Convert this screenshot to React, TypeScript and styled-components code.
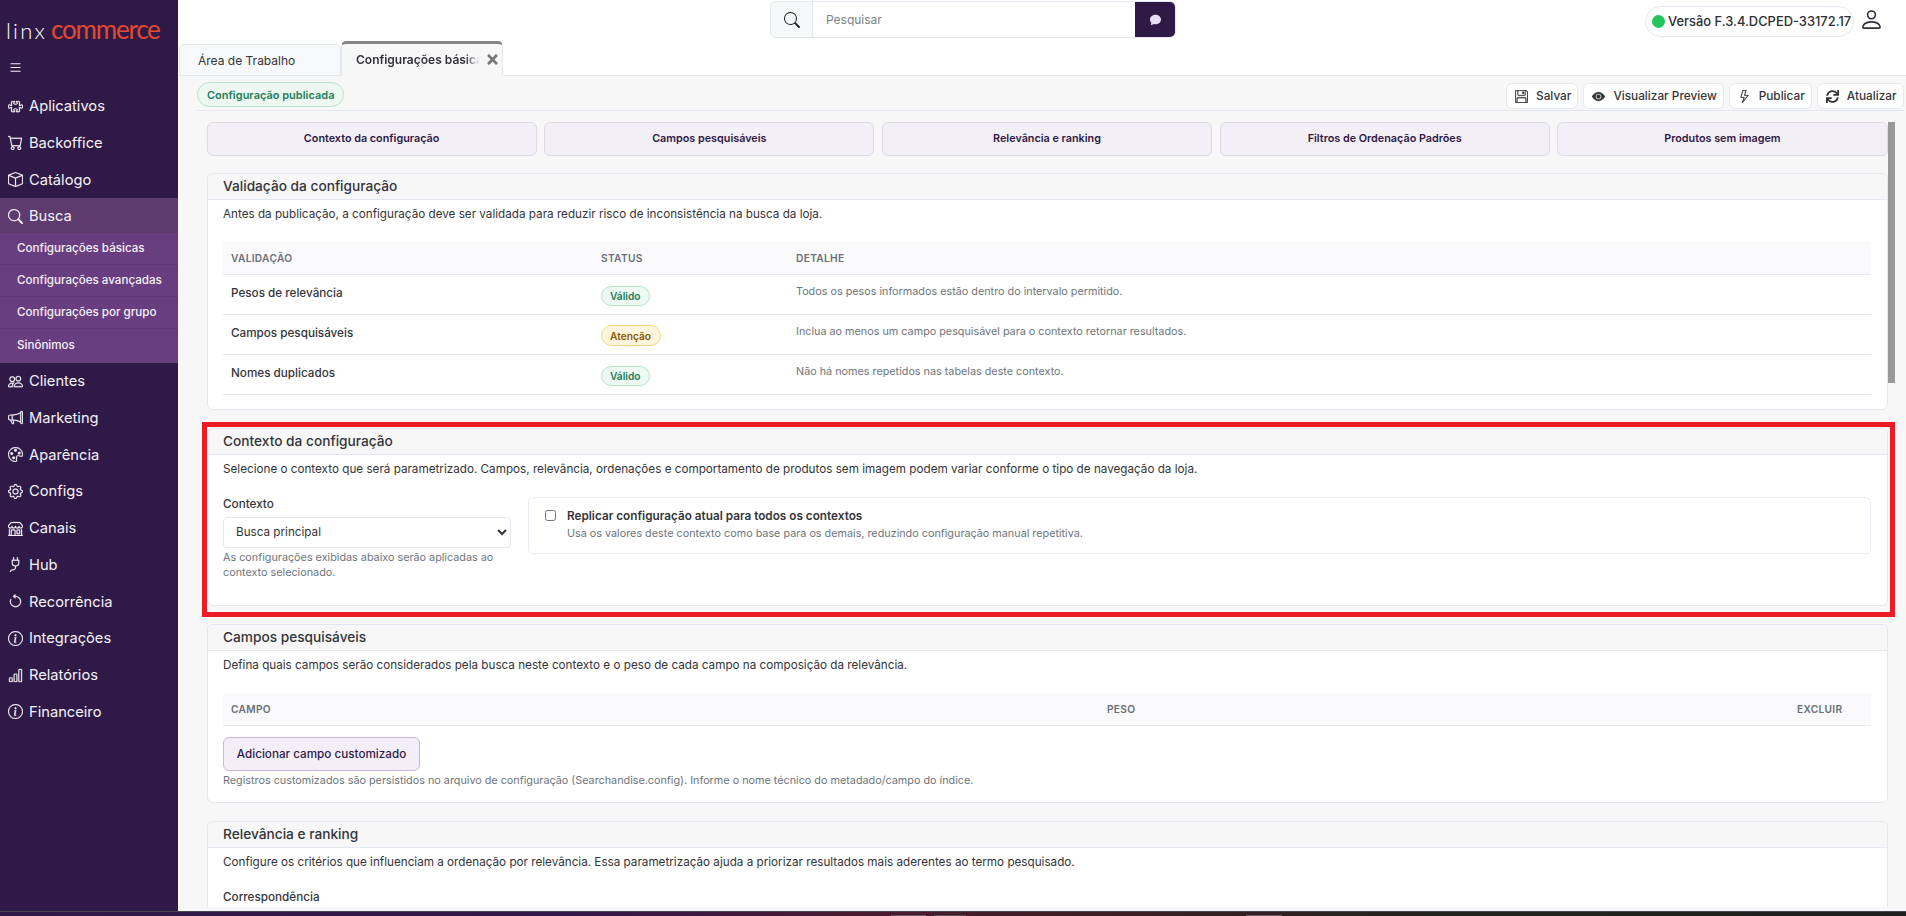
import { ReactNode } from "react";
import styled, { createGlobalStyle } from "styled-components";
import {
    BsArrowCounterclockwise,
    BsBarChart,
    BsBox,
    BsCart,
    BsChatFill,
    BsEyeFill,
    BsFloppy,
    BsGear,
    BsInfoCircle,
    BsLightning,
    BsList,
    BsMegaphone,
    BsPalette,
    BsPeople,
    BsPerson,
    BsPlug,
    BsPuzzle,
    BsSearch,
    BsShop,
} from "react-icons/bs";
import { FaSync, FaTimes } from "react-icons/fa";

const GlobalStyle = createGlobalStyle`
    html, body {
        margin: 0;
        height: 100%;
        overflow: hidden;
        background: #ffffff;
    }
    body, input, select, button {
        font-family: Inter, "Noto Sans", sans-serif;
    }
    * {
        box-sizing: border-box;
    }
`;

const Shell = styled.div`
    display: flex;
    flex-flow: column nowrap;
    height: 916px;
`;

const Frame = styled.div`
    display: flex;
    flex: 1;
    min-height: 0;
`;

const TaskbarStrip = styled.div`
    height: 5px;
    flex: none;
    border-top: 1px solid #4b4450;
    background:
        linear-gradient(#6d5560, #6d5560) 891px 3px / 35px 2px no-repeat,
        linear-gradient(#5c4a50, #5c4a50) 934px 3px / 32px 2px no-repeat,
        linear-gradient(#6d5560, #6d5560) 1246px 3px / 36px 2px no-repeat,
        linear-gradient(90deg, #2f1a47 0%, #34174a 30%, #4a1a30 45%, #3a1f22 60%, #222220 75%, #1e1e1e 100%);
`;

const Sidebar = styled.aside`
    width: 178px;
    flex: none;
    background: #2f1a47;
    color: #f5f1f8;
`;

const Logo = styled.div`
    height: 56px;
    padding: 14px 0 0 6px;
    font-family: Lato, sans-serif;
    font-weight: 300;
    font-size: 22px;
    letter-spacing: 2.2px;
    line-height: 30px;
    white-space: nowrap;
    color: #ffffff;
`;

const LogoAccent = styled.span`
    color: #e4492f;
    margin-left: 4px;
    font-size: 26px;
    font-weight: 400;
    letter-spacing: -1.2px;
`;

const Burger = styled.div`
    height: 31.7px;
    padding: 4px 0 0 8px;
    font-size: 15px;
    line-height: 1;
`;

const NavItem = styled.div<{ $active?: boolean }>`
    display: flex;
    align-items: center;
    gap: 6px;
    height: 36.75px;
    padding-left: 8px;
    font-size: 14.7px;
    background: ${(p) => (p.$active ? "#5d3b6e" : "transparent")};

    svg {
        width: 15px;
        height: 15px;
        flex: none;
        stroke: currentColor;
        stroke-width: 0.25;
    }
`;

const SubNav = styled.div`
    padding-bottom: 2px;
    background: #693e80;
`;

const SubNavItem = styled.div`
    display: flex;
    align-items: center;
    height: 32px;
    padding-left: 17px;
    font-size: 11.6px;
    font-weight: 500;
    border-bottom: 1px solid #5f3974;

    &:first-child {
        margin-top: -2px;
    }

    &:last-child {
        border-bottom: 0;
    }
`;

const Main = styled.main`
    flex: 1;
    min-width: 0;
    display: flex;
    flex-flow: column nowrap;
`;

const TopBar = styled.header`
    height: 43px;
    flex: none;
    display: flex;
    align-items: flex-start;
    padding: 1px 22px 0 592px;
`;

const SearchBox = styled.div`
    display: flex;
    width: 406px;
    height: 37px;
    border: 1px solid #e3e7ef;
    border-radius: 6px;
    overflow: hidden;
`;

const SearchIcon = styled.div`
    width: 42px;
    display: flex;
    align-items: center;
    justify-content: center;
    background: #f7f8fa;
    border-right: 1px solid #e3e7ef;
    font-size: 16px;
    color: #212529;
`;

const SearchInput = styled.input`
    flex: 1;
    min-width: 0;
    border: 0;
    outline: 0;
    padding: 0 13px;
    font-size: 12px;

    &::placeholder {
        color: #7b8189;
        opacity: 1;
    }
`;

const SearchButton = styled.button`
    width: 40px;
    border: 0;
    padding: 0;
    background: #2f1a47;
    color: #e8dff2;
    font-size: 11px;
    display: flex;
    align-items: center;
    justify-content: center;
`;

const VersionPill = styled.div`
    margin: 5px 0 0 auto;
    height: 31px;
    width: 209px;
    display: flex;
    align-items: center;
    gap: 3px;
    padding-left: 6px;
    border: 1px solid #e3e7ef;
    border-radius: 16px;
    font-size: 12.9px;
    font-weight: 500;
    color: #2b2f36;
    white-space: nowrap;
`;

const StatusDot = styled.span`
    width: 13px;
    height: 13px;
    border-radius: 50%;
    background: #22c55e;
    flex: none;
`;

const UserIcon = styled.div`
    margin: 6px 0 0 5px;
    font-size: 25px;
    line-height: 1;
    color: #2b2f36;
`;

const TabBar = styled.nav`
    height: 33px;
    flex: none;
    display: flex;
    align-items: flex-end;
    padding-left: 1px;
    border-bottom: 1px solid #e3e7ef;
`;

const Tab = styled.div<{ $active?: boolean }>`
    position: relative;
    display: flex;
    align-items: center;
    height: ${(p) => (p.$active ? "35px" : "32px")};
    width: 162px;
    margin-bottom: -1px;
    padding-left: ${(p) => (p.$active ? "14px" : "18px")};
    background: ${(p) => (p.$active ? "#f7f7f8" : "#f8f9fb")};
    border: 1px solid #e3e7ef;
    border-bottom: ${(p) => (p.$active ? "1px solid #f7f7f8" : "1px solid #e3e7ef")};
    border-top: ${(p) => (p.$active ? "3px solid #868686" : "1px solid #e3e7ef")};
    border-radius: 5px 5px 0 0;
    font-size: 12px;
    font-weight: ${(p) => (p.$active ? 600 : 400)};
    color: #33343a;
    white-space: nowrap;
    overflow: hidden;
`;

const TabFade = styled.span`
    display: block;
    width: 124px;
    overflow: hidden;
    -webkit-mask-image: linear-gradient(90deg, #000 88%, transparent 100%);
    mask-image: linear-gradient(90deg, #000 88%, transparent 100%);
`;

const TabClose = styled.span`
    margin-left: 5px;
    margin-top: 2px;
    color: #777;
    font-size: 15px;
    line-height: 1;
`;

const Workspace = styled.div`
    flex: 1;
    min-height: 0;
    display: flex;
    flex-flow: column nowrap;
    background: #f7f7f8;
`;

const Toolbar = styled.div`
    height: 35px;
    flex: none;
    margin: 0 2.5px 0 19px;
    display: flex;
    align-items: flex-start;
    justify-content: space-between;
    border-bottom: 1px solid #e3e7ef;
`;

const StatusPill = styled.span`
    margin-top: 6px;
    height: 25px;
    padding: 0 9px;
    display: inline-flex;
    align-items: center;
    border: 1px solid #b9e3cc;
    border-radius: 13px;
    background: #edf8f2;
    color: #1d7f5a;
    font-size: 11px;
    font-weight: 600;
`;

const ToolbarActions = styled.div`
    display: flex;
    gap: 5px;
    margin-top: 7px;
`;

const ToolButton = styled.button`
    height: 26px;
    display: inline-flex;
    align-items: center;
    gap: 8px;
    padding: 0 6px 0 8px;
    border: 1px solid #e6e9f0;
    border-radius: 6px;
    background: #ffffff;
    color: #33343a;
    font-size: 11.8px;
    font-weight: 500;
    white-space: nowrap;

    svg {
        width: 13px;
        height: 13px;
        stroke: currentColor;
        stroke-width: 0.25;
    }
`;

const Scroller = styled.div`
    position: relative;
    flex: 1;
    min-height: 0;
    margin: 0 0 4px 0;
    padding: 11px 18.5px 0 28.5px;
    overflow: hidden;
`;

const ScrollThumb = styled.div`
    position: absolute;
    top: 11px;
    right: 11px;
    width: 7px;
    height: 261px;
    background: #999999;
`;

const SectionNav = styled.div`
    display: grid;
    grid-template-columns: repeat(5, 1fr);
    gap: 7.5px;
    margin-bottom: 17px;
`;

const SectionButton = styled.button`
    height: 33.5px;
    border: 1px solid #dcd9e3;
    border-radius: 6px;
    background: #f3eff6;
    color: #2f1a47;
    font-size: 10.8px;
    font-weight: 600;
    padding: 0;
`;

const Card = styled.section`
    position: relative;
    margin-bottom: 17.5px;
    background: #ffffff;
    border: 1px solid #e3e7ef;
    border-radius: 6px;
`;

const CardHeader = styled.h2`
    margin: 0;
    height: 26px;
    padding: 0 15.5px;
    display: flex;
    align-items: center;
    background: #f7f7f8;
    border-bottom: 1px solid #e3e7ef;
    border-radius: 6px 6px 0 0;
    font-size: 13.7px;
    font-weight: 500;
    color: #33343a;
`;

const CardBody = styled.div`
    padding: 5px 15.5px 14.5px;
`;

const Description = styled.p`
    margin: 0 0 19px;
    font-size: 11.7px;
    line-height: 18px;
    color: #33343a;
`;

const TableRow = styled.div<{ $columns: string; $head?: boolean }>`
    display: grid;
    grid-template-columns: ${(p) => p.$columns};
    align-items: ${(p) => (p.$head ? "center" : "start")};
    height: ${(p) => (p.$head ? "33px" : "40px")};
    padding-top: ${(p) => (p.$head ? "0" : "9px")};
    background: ${(p) => (p.$head ? "#fafafc" : "#ffffff")};
    border-bottom: 1px solid #e6e9f0;
`;

const HeadCell = styled.div`
    padding-left: 8px;
    font-size: 10.2px;
    font-weight: 600;
    letter-spacing: 0.3px;
    color: #6b6f78;
`;

const NameCell = styled.div`
    padding-left: 8px;
    font-size: 11.7px;
    font-weight: 550;
    line-height: 18px;
    color: #33343a;
`;

const BadgeCell = styled.div`
    padding-left: 7.5px;
`;

const Badge = styled.span<{ $warn?: boolean }>`
    display: inline-flex;
    align-items: center;
    height: ${(p) => (p.$warn ? "21px" : "20px")};
    padding: 0 8.5px;
    border: 1px solid ${(p) => (p.$warn ? "#f4d58a" : "#b9e3cc")};
    border-radius: 11px;
    background: ${(p) => (p.$warn ? "#fff5dc" : "#edf8f2")};
    color: ${(p) => (p.$warn ? "#8a5a00" : "#1d7f5a")};
    font-size: 10.2px;
    font-weight: 600;
`;

const DetailCell = styled.div`
    padding-left: 8px;
    font-size: 10.8px;
    line-height: 16px;
    color: #6c757d;
`;

const ContextGrid = styled.div`
    display: grid;
    grid-template-columns: 288px 1fr;
    gap: 17px;
    margin-top: 1px;
    padding-bottom: 11px;
`;

const FieldLabel = styled.label`
    display: block;
    font-size: 11.7px;
    font-weight: 550;
    line-height: 14px;
    margin-bottom: 6px;
    color: #33343a;
`;

const ContextSelect = styled.select`
    display: block;
    width: 100%;
    height: 31px;
    padding: 0 8px;
    border: 1px solid #e3e7ef;
    border-radius: 4px;
    background: #ffffff;
    font-size: 11.7px;
    color: #33343a;
    outline: 0;
`;

const HintText = styled.div`
    margin-top: 2px;
    font-size: 10.8px;
    line-height: 15px;
    color: #6c757d;
`;

const ReplicateBox = styled.div`
    height: 57px;
    display: flex;
    gap: 11px;
    padding: 10px 16px 0;
    border: 1px solid #e8ebf1;
    border-radius: 5px;
`;

const ReplicateCheck = styled.input`
    width: 11px;
    height: 11px;
    margin: 2px 0 0;
    flex: none;
`;

const ReplicateTitle = styled.div`
    font-size: 11.75px;
    font-weight: 600;
    line-height: 16px;
    color: #33343a;
`;

const ReplicateHint = styled.div`
    margin-top: 2px;
    font-size: 10.8px;
    line-height: 16px;
    color: #6c757d;
`;

const AddFieldButton = styled.button`
    display: block;
    margin-top: 11px;
    width: 197px;
    height: 34px;
    padding: 0;
    border: 1px solid #c9b8dc;
    border-radius: 6px;
    background: #f3eef8;
    color: #2f1a47;
    font-size: 11.7px;
    font-weight: 500;
`;

const HighlightFrame = styled.div`
    position: absolute;
    top: -7px;
    left: -6px;
    right: -8px;
    bottom: -12px;
    border: 5px solid #ed1c24;
    pointer-events: none;
`;

const navItems: [string, ReactNode][] = [
    ["Aplicativos", <BsPuzzle />],
    ["Backoffice", <BsCart />],
    ["Catálogo", <BsBox />],
];

const navItemsAfter: [string, ReactNode][] = [
    ["Clientes", <BsPeople />],
    ["Marketing", <BsMegaphone />],
    ["Aparência", <BsPalette />],
    ["Configs", <BsGear />],
    ["Canais", <BsShop />],
    ["Hub", <BsPlug />],
    ["Recorrência", <BsArrowCounterclockwise />],
    ["Integrações", <BsInfoCircle />],
    ["Relatórios", <BsBarChart />],
    ["Financeiro", <BsInfoCircle />],
];

const subItems = ["Configurações básicas", "Configurações avançadas", "Configurações por grupo", "Sinônimos"];
const sections = ["Contexto da configuração", "Campos pesquisáveis", "Relevância e ranking", "Filtros de Ordenação Padrões", "Produtos sem imagem"];

const validationColumns = "370px 195px 1fr";
const fieldColumns = "876px 690px 1fr";

const validations = [
    { name: "Pesos de relevância", status: "Válido", detail: "Todos os pesos informados estão dentro do intervalo permitido." },
    { name: "Campos pesquisáveis", status: "Atenção", warn: true, detail: "Inclua ao menos um campo pesquisável para o contexto retornar resultados." },
    { name: "Nomes duplicados", status: "Válido", detail: "Não há nomes repetidos nas tabelas deste contexto." },
];

export default function App() {
    return (
        <Shell>
            <GlobalStyle />
            <Frame>
                <Sidebar>
                    <Logo>
                        linx<LogoAccent>commerce</LogoAccent>
                    </Logo>
                    <Burger>
                        <BsList />
                    </Burger>
                    {navItems.map(([label, icon]) => (
                        <NavItem key={label}>
                            {icon}
                            {label}
                        </NavItem>
                    ))}
                    <NavItem $active>
                        <BsSearch />
                        Busca
                    </NavItem>
                    <SubNav>
                        {subItems.map((label) => (
                            <SubNavItem key={label}>{label}</SubNavItem>
                        ))}
                    </SubNav>
                    {navItemsAfter.map(([label, icon]) => (
                        <NavItem key={label}>
                            {icon}
                            {label}
                        </NavItem>
                    ))}
                </Sidebar>
                <Main>
                    <TopBar>
                        <SearchBox>
                            <SearchIcon>
                                <BsSearch />
                            </SearchIcon>
                            <SearchInput placeholder="Pesquisar" />
                            <SearchButton>
                                <BsChatFill />
                            </SearchButton>
                        </SearchBox>
                        <VersionPill>
                            <StatusDot />
                            Versão F.3.4.DCPED-33172.17
                        </VersionPill>
                        <UserIcon>
                            <BsPerson />
                        </UserIcon>
                    </TopBar>
                    <TabBar>
                        <Tab>Área de Trabalho</Tab>
                        <Tab $active>
                            <TabFade>Configurações básicas</TabFade>
                            <TabClose>
                                <FaTimes />
                            </TabClose>
                        </Tab>
                    </TabBar>
                    <Workspace>
                        <Toolbar>
                            <StatusPill>Configuração publicada</StatusPill>
                            <ToolbarActions>
                                <ToolButton>
                                    <BsFloppy />
                                    Salvar
                                </ToolButton>
                                <ToolButton>
                                    <BsEyeFill />
                                    Visualizar Preview
                                </ToolButton>
                                <ToolButton>
                                    <BsLightning />
                                    Publicar
                                </ToolButton>
                                <ToolButton>
                                    <FaSync />
                                    Atualizar
                                </ToolButton>
                            </ToolbarActions>
                        </Toolbar>
                        <Scroller>
                            <ScrollThumb />
                            <SectionNav>
                                {sections.map((label) => (
                                    <SectionButton key={label}>{label}</SectionButton>
                                ))}
                            </SectionNav>

                            <Card>
                                <CardHeader>Validação da configuração</CardHeader>
                                <CardBody>
                                    <Description>
                                        Antes da publicação, a configuração deve ser validada para reduzir risco de inconsistência na busca da loja.
                                    </Description>
                                    <TableRow $head $columns={validationColumns}>
                                        <HeadCell>VALIDAÇÃO</HeadCell>
                                        <HeadCell>STATUS</HeadCell>
                                        <HeadCell>DETALHE</HeadCell>
                                    </TableRow>
                                    {validations.map((row) => (
                                        <TableRow key={row.name} $columns={validationColumns}>
                                            <NameCell>{row.name}</NameCell>
                                            <BadgeCell>
                                                <Badge $warn={row.warn}>{row.status}</Badge>
                                            </BadgeCell>
                                            <DetailCell>{row.detail}</DetailCell>
                                        </TableRow>
                                    ))}
                                </CardBody>
                            </Card>

                            <Card>
                                <HighlightFrame />
                                <CardHeader>Contexto da configuração</CardHeader>
                                <CardBody>
                                    <Description>
                                        Selecione o contexto que será parametrizado. Campos, relevância, ordenações e comportamento de produtos sem imagem podem variar conforme o tipo de navegação da loja.
                                    </Description>
                                    <ContextGrid>
                                        <div>
                                            <FieldLabel>Contexto</FieldLabel>
                                            <ContextSelect defaultValue="principal">
                                                <option value="principal">Busca principal</option>
                                            </ContextSelect>
                                            <HintText>As configurações exibidas abaixo serão aplicadas ao contexto selecionado.</HintText>
                                        </div>
                                        <ReplicateBox>
                                            <ReplicateCheck type="checkbox" />
                                            <div>
                                                <ReplicateTitle>Replicar configuração atual para todos os contextos</ReplicateTitle>
                                                <ReplicateHint>Usa os valores deste contexto como base para os demais, reduzindo configuração manual repetitiva.</ReplicateHint>
                                            </div>
                                        </ReplicateBox>
                                    </ContextGrid>
                                </CardBody>
                            </Card>

                            <Card>
                                <CardHeader>Campos pesquisáveis</CardHeader>
                                <CardBody>
                                    <Description>
                                        Defina quais campos serão considerados pela busca neste contexto e o peso de cada campo na composição da relevância.
                                    </Description>
                                    <TableRow $head $columns={fieldColumns}>
                                        <HeadCell>CAMPO</HeadCell>
                                        <HeadCell>PESO</HeadCell>
                                        <HeadCell>EXCLUIR</HeadCell>
                                    </TableRow>
                                    <AddFieldButton>Adicionar campo customizado</AddFieldButton>
                                    <HintText>
                                        Registros customizados são persistidos no arquivo de configuração (Searchandise.config). Informe o nome técnico do metadado/campo do índice.
                                    </HintText>
                                </CardBody>
                            </Card>

                            <Card>
                                <CardHeader>Relevância e ranking</CardHeader>
                                <CardBody>
                                    <Description>
                                        Configure os critérios que influenciam a ordenação por relevância. Essa parametrização ajuda a priorizar resultados mais aderentes ao termo pesquisado.
                                    </Description>
                                    <FieldLabel>Correspondência</FieldLabel>
                                </CardBody>
                            </Card>
                        </Scroller>
                    </Workspace>
                </Main>
            </Frame>
            <TaskbarStrip />
        </Shell>
    );
}
